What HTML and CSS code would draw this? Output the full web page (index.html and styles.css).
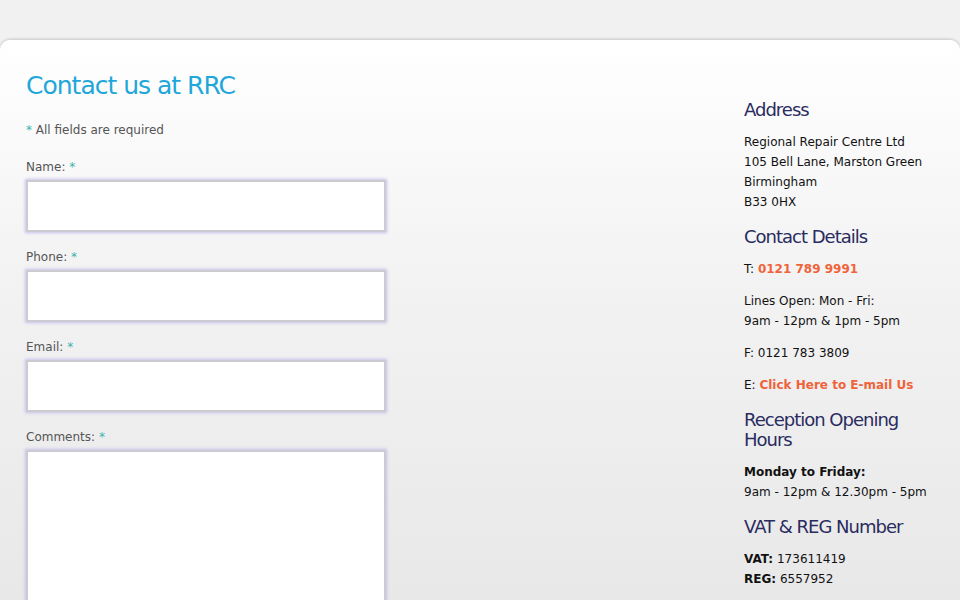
FILE: index.html
```html
<!DOCTYPE html>
<html lang="en">
<head>
<meta charset="UTF-8">
<meta name="viewport" content="width=device-width, initial-scale=1.0">
<title>Contact us at RRC</title>
<link rel="stylesheet" href="styles.css">
</head>
<body>
  <div class="page">
    <div class="content">
      <div class="contact-form">
        <h1 class="page-title">Contact us at RRC</h1>
        <p class="required-note"><span class="req">*</span> All fields are required</p>

        <form>
          <div class="field">
            <label for="name">Name: <span class="req">*</span></label>
            <input type="text" id="name">
          </div>
          <div class="field">
            <label for="phone">Phone: <span class="req">*</span></label>
            <input type="text" id="phone">
          </div>
          <div class="field">
            <label for="email">Email: <span class="req">*</span></label>
            <input type="text" id="email">
          </div>
          <div class="field">
            <label for="comments">Comments: <span class="req">*</span></label>
            <textarea id="comments"></textarea>
          </div>
        </form>
      </div>

      <div class="sidebar">
        <h3>Address</h3>
        <p>Regional Repair Centre Ltd<br>105 Bell Lane, Marston Green<br>Birmingham<br>B33 0HX</p>

        <h3>Contact Details</h3>
        <p>T: <a href="#">0121 789 9991</a></p>
        <p>Lines Open: Mon - Fri:<br>9am - 12pm &amp; 1pm - 5pm</p>
        <p>F: 0121 783 3809</p>
        <p>E: <a href="#">Click Here to E-mail Us</a></p>

        <h3>Reception Opening Hours</h3>
        <p><strong>Monday to Friday:</strong><br>9am - 12pm &amp; 12.30pm - 5pm</p>

        <h3>VAT &amp; REG Number</h3>
        <p><strong>VAT:</strong> 173611419<br><strong>REG:</strong> 6557952</p>
      </div>
    </div>
  </div>
</body>
</html>
```

FILE: styles.css
```css
body {
  margin: 0;
  padding: 0;
  font-family: "DejaVu Sans", Verdana, sans-serif;
  font-size: 12px;
  color: #111111;
  background: #f1f1f1;
  height: 600px;
  overflow: hidden;
}

.page {
  padding-top: 40px;
}

.content {
  background: linear-gradient(to bottom, #ffffff 0%, #f3f3f4 40%, #e8e8e9 100%);
  border-radius: 10px 10px 0 0;
  box-shadow: 0 -1px 3px rgba(0, 0, 0, 0.18);
  height: 560px;
  overflow: hidden;
  display: flex;
  justify-content: space-between;
}

.contact-form {
  padding: 31px 0 0 26px;
}

.page-title {
  margin: 0;
  font-size: 25px;
  font-weight: normal;
  line-height: 30px;
  letter-spacing: -1px;
  color: #1fa7d9;
}

.required-note {
  margin: 21px 0 21px;
  line-height: 16px;
  color: #555555;
}

.req {
  color: #3cb3b0;
}

.field {
  margin-bottom: 17px;
}

.field label {
  display: block;
  line-height: 16px;
  color: #555555;
  margin-bottom: 5px;
}

.field input,
.field textarea {
  display: block;
  box-sizing: border-box;
  width: 360px;
  height: 52px;
  margin: 0;
  border: 2px solid #cbcbd2;
  background: #ffffff;
  box-shadow: 0 0 3px 1px #c6c0ea;
  font-family: inherit;
  font-size: 12px;
}

.field textarea {
  height: 200px;
  resize: none;
}

.sidebar {
  width: 190px;
  padding: 60px 26px 0 0;
}

.sidebar h3 {
  margin: 15px 0 12px;
  font-size: 18px;
  font-weight: normal;
  line-height: 20px;
  letter-spacing: -1px;
  color: #2a2b5e;
}

.sidebar h3:first-child {
  margin-top: 0;
}

.sidebar p {
  margin: 0 0 12px;
  line-height: 20px;
  white-space: nowrap;
}

.sidebar a {
  color: #f0633a;
  font-weight: bold;
  text-decoration: none;
}
```
